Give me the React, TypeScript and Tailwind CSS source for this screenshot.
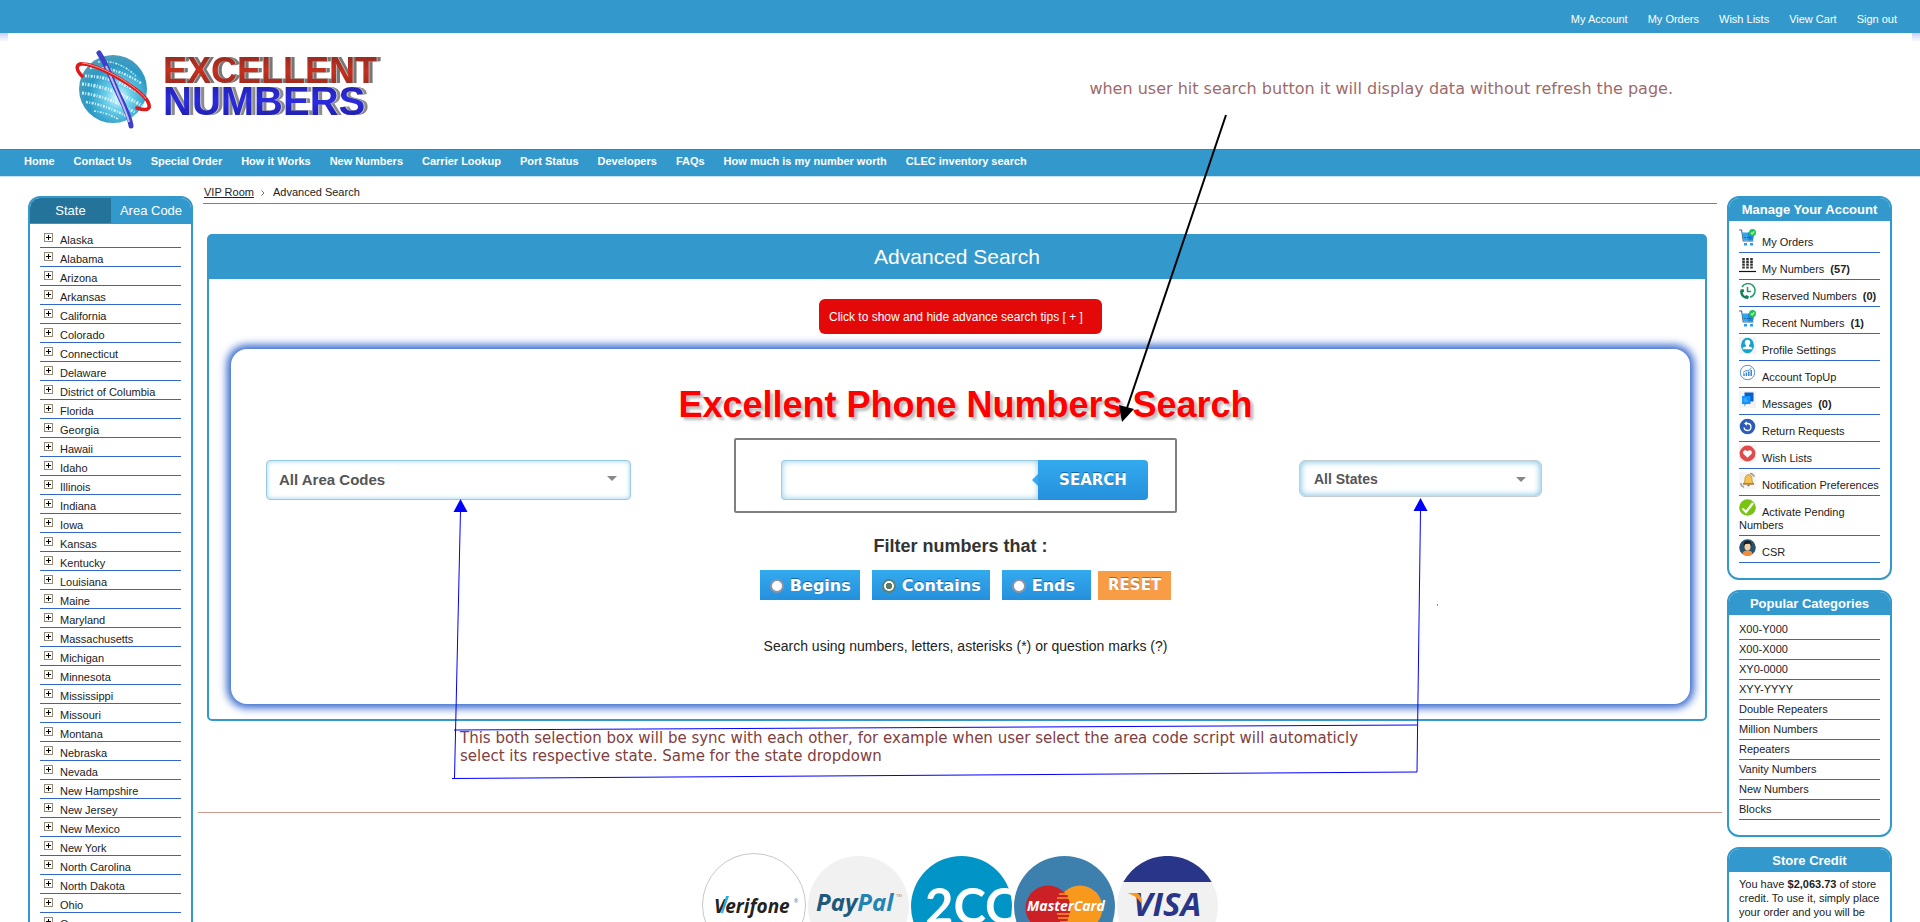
import { useState } from "react";
import type { ReactNode } from "react";

const topLinks = ["My Account", "My Orders", "Wish Lists", "View Cart", "Sign out"];

const navLinks = [
  "Home",
  "Contact Us",
  "Special Order",
  "How it Works",
  "New Numbers",
  "Carrier Lookup",
  "Port Status",
  "Developers",
  "FAQs",
  "How much is my number worth",
  "CLEC inventory search",
];

const states = [
  "Alaska", "Alabama", "Arizona", "Arkansas", "California", "Colorado", "Connecticut", "Delaware",
  "District of Columbia", "Florida", "Georgia", "Hawaii", "Idaho", "Illinois", "Indiana", "Iowa",
  "Kansas", "Kentucky", "Louisiana", "Maine", "Maryland", "Massachusetts", "Michigan", "Minnesota",
  "Mississippi", "Missouri", "Montana", "Nebraska", "Nevada", "New Hampshire", "New Jersey",
  "New Mexico", "New York", "North Carolina", "North Dakota", "Ohio", "Oregon",
];

const categories = [
  "X00-Y000", "X00-X000", "XY0-0000", "XYY-YYYY", "Double Repeaters", "Million Numbers",
  "Repeaters", "Vanity Numbers", "New Numbers", "Blocks",
];

const CartIcon = () => (
  <>
    <path d="M0 1h2.6l1.6 11h10" fill="none" stroke="#4a6378" strokeWidth="1.1" />
    <path d="M3 3.5h12l-1 8H4.3z" fill="#34a5ea" />
    <path d="M9 3.5h6l-1 8H9z" fill="#1f86d6" />
    <path d="M5.5 8.5h1M8 8.5h1M10.500 8.500h1" stroke="#0d3f6d" />
    <path d="M4 12.500h10.500" stroke="#9fb2c2" />
    <rect x="5" y="14" width="3" height="2.500" fill="#2b9cf2" />
    <rect x="11" y="14" width="3" height="2.500" fill="#2b9cf2" />
    <circle cx="13.500" cy="3.500" r="3.500" fill="#18c55c" />
    <path d="M11.900 3.600l1.200 1.200 2.100-2.300" fill="none" stroke="#d6ff7b" strokeWidth="1.200" />
  </>
);

const accountItems: { label: string; count?: number; icon: ReactNode }[] = [
  { label: "My Orders", icon: <CartIcon /> },
  {
    label: "My Numbers",
    count: 57,
    icon: (
      <>
        <path d="M4.500 2v11M8.500 2v11M12.500 2v11" stroke="#333" strokeWidth="2.600" strokeDasharray="2.200 .6" />
        <path d="M0 15.500h17" stroke="#111" strokeWidth="1.200" />
      </>
    ),
  },
  {
    label: "Reserved Numbers",
    count: 0,
    icon: (
      <>
        <path d="M3 4A7 7 0 1 1 11 14.300" fill="none" stroke="#1d9a6c" strokeWidth="1.500" />
        <path d="M8.500 4v4.500h3.500" fill="none" stroke="#1d9a6c" strokeWidth="1.500" />
        <path d="M1.500 6.500c-1.500 5 2 9.500 7.500 9.500l1-2.500-2.500-1.500-1.500 1C4.500 12 3.800 10.500 3.800 9.500l1.400-.8L4.500 6z" fill="#15805a" />
      </>
    ),
  },
  { label: "Recent Numbers", count: 1, icon: <CartIcon /> },
  {
    label: "Profile Settings",
    icon: (
      <>
        <rect width="17" height="17" fill="#f3f3f3" />
        <ellipse cx="8.500" cy="8.500" rx="6.500" ry="7.700" fill="#12a5cc" />
        <path d="M8.500 2.800a2.600 2.900 0 0 1 1.500 5.400v1.300c1.800.4 3.300 1 3.500 2.700H3.500c.2-1.700 1.700-2.300 3.500-2.700V8.200a2.600 2.900 0 0 1 1.500-5.400z" fill="#fff" />
      </>
    ),
  },
  {
    label: "Account TopUp",
    icon: (
      <>
        <circle cx="8.500" cy="8.500" r="7.200" fill="#fff" stroke="#4b93dc" strokeWidth="1" />
        <path d="M5 12V9.500M7.400 12V8.500M9.800 12V7.500M12.200 12V6" stroke="#3c84d6" strokeWidth="1.500" />
        <path d="M4 8.500L7 6.500l2 .5 3.500-3" fill="none" stroke="#3c84d6" strokeWidth=".9" />
      </>
    ),
  },
  {
    label: "Messages",
    count: 0,
    icon: (
      <>
        <rect width="17" height="17" fill="#f3f3f3" />
        <path d="M5.500 1.500h9v9h-9z" fill="#0b5fc4" />
        <path d="M3 5h8.500v8H7l-1.500 2.500V13H3z" fill="#1392ff" />
        <path d="M4.500 8h3M4.500 10h4.500" stroke="#7fc6ff" strokeWidth=".8" />
      </>
    ),
  },
  {
    label: "Return Requests",
    icon: (
      <>
        <circle cx="8.500" cy="8.500" r="7.800" fill="#2b5cb8" />
        <path d="M5 9.500a3.500 3.500 0 1 0 3.500-4H7" fill="none" stroke="#fff" strokeWidth="1.300" />
        <path d="M7.800 3.200v4.600L5 5.500z" fill="#fff" />
      </>
    ),
  },
  {
    label: "Wish Lists",
    icon: (
      <>
        <rect width="17" height="17" fill="#f3f3f3" />
        <circle cx="8.500" cy="8.500" r="7.900" fill="#e04b4b" />
        <path d="M8.500 12.800L4.600 8.900C3 7 5.500 3.500 8.500 6.200c3-2.700 5.500.8 3.900 2.700z" fill="#fff" />
      </>
    ),
  },
  {
    label: "Notification Preferences",
    icon: (
      <>
        <rect width="17" height="17" fill="#f5f5f5" />
        <path d="M11 .8c2.500 0 4.500 1.700 5 4.200l-2-.5c-.5-1.300-1.500-2-3-2.200zM1 11c0 2.500 1.700 4.500 4.200 5l-.5-2C3.400 13.500 2.700 12.500 2.500 11z" fill="#a39a8d" />
        <path d="M9.500 2.500c3 .3 3.600 2.500 3.600 5 0 2 .6 3.200 1.600 4.300H4.300c1-1.100 1.500-2.300 1.600-4.300.1-2.500 1-4.700 3.600-5z" fill="#f2c14e" stroke="#b5832a" strokeWidth=".7" />
        <path d="M4 12h11" stroke="#8a5d20" />
        <path d="M8 13h3l-1.500 1.600z" fill="#8a5d20" />
      </>
    ),
  },
  {
    label: "Activate Pending Numbers",
    icon: (
      <>
        <circle cx="8.500" cy="8.500" r="8.300" fill="#79c411" />
        <path d="M3.500 9.500l3.500 3.500L14 4" fill="none" stroke="#fff" strokeWidth="2.300" />
      </>
    ),
  },
  {
    label: "CSR",
    icon: (
      <>
        <circle cx="8.500" cy="8.500" r="8.300" fill="#2a526e" />
        <path d="M3.500 15.200c.3-3 2-3.700 5-3.700s4.700.7 5 3.700a8.300 8.300 0 0 1-10 0z" fill="#f08c3c" />
        <ellipse cx="8.500" cy="7.500" rx="3" ry="4" fill="#f6cfa0" />
        <path d="M4.800 7.500C4 3 6.500 1.800 8.500 1.800s4.700 1.200 3.700 5.700L11 4.800 6.500 5z" fill="#1d1d1d" />
      </>
    ),
  },
];

const Logo = () => (
  <svg width="330" height="100" viewBox="0 0 330 100" role="img" aria-label="Excellent Numbers" fontFamily="'Liberation Sans', sans-serif" fontWeight="bold">
    <defs>
      <radialGradient id="globe" cx=".58" cy=".62" r=".6">
        <stop offset="0" stopColor="#eafcff" />
        <stop offset=".3" stopColor="#6fd0ea" />
        <stop offset=".75" stopColor="#2b9ac6" />
        <stop offset="1" stopColor="#4a9cba" />
      </radialGradient>
      <linearGradient id="red" x1="0" y1="0" x2="0" y2="1">
        <stop offset="0" stopColor="#7e2a22" />
        <stop offset=".5" stopColor="#c5301f" />
        <stop offset="1" stopColor="#8c2a20" />
      </linearGradient>
      <linearGradient id="blue" x1="0" y1="0" x2="0" y2="1">
        <stop offset="0" stopColor="#2020a0" />
        <stop offset=".5" stopColor="#2b2be0" />
        <stop offset="1" stopColor="#1c1c98" />
      </linearGradient>
    </defs>
    <circle cx="43" cy="49" r="34" fill="url(#globe)" />
    <g fill="none" stroke="#e6fbff" strokeWidth="2.400" strokeDasharray="2 1.300 1 1.500" opacity=".85">
      <path d="M28 22q20-3 38 14" strokeWidth="1.600" />
      <path d="M20 28q26-2 52 16" />
      <path d="M15 36q28 0 60 20" strokeWidth="3" />
      <path d="M12 44q28 2 60 22" strokeWidth="3.400" />
      <path d="M12 53q26 3 54 20" strokeWidth="3" />
      <path d="M16 62q20 3 42 15" />
      <path d="M24 71q14 2 24 8" strokeWidth="1.600" />
    </g>
    <path d="M29 13C36 23 42 40 47 51S60 76 61 86" fill="none" stroke="#3f3fc8" strokeWidth="5" strokeLinecap="round" />
    <path d="M36 26C41 37 44 45 48 54s9 20 11 28" fill="none" stroke="#b9bcf5" strokeWidth="2" />
    <path d="M12 36C4 28 7 23 14 24c18 2 58 26 64 38 4 8-2 9-11 6" fill="none" stroke="#e01818" strokeWidth="3.600" strokeLinecap="round" />
    <path d="M12 23c20 2 56 24 64 36" fill="none" stroke="#ff9090" strokeWidth="1" />
    <text x="93" y="43" fontSize="36" fill="url(#red)" className="[filter:drop-shadow(1px_0_0_#b8b8b8)_drop-shadow(3px_0_0_#777)]">
      EXCELLENT
    </text>
    <text x="93" y="75" fontSize="40" fill="url(#blue)" className="[filter:drop-shadow(1px_0_0_#d0d0d0)_drop-shadow(3px_0_0_#8c8c8c)]">
      NUMBERS
    </text>
  </svg>
);

const Caret = ({ className }: { className: string }) => (
  <svg className={className} width="10" height="5" viewBox="0 0 10 5" aria-hidden="true">
    <path d="M0 0h10L5 5z" fill="#888" />
  </svg>
);

const SideBox = ({ title, children }: { title: string; children: ReactNode }) => (
  <section className="overflow-hidden rounded-xl border-2 border-[#3399cc] bg-white">
    <h2 className="h-[23px] bg-[#3399cc] text-center text-[13px] leading-[23px] font-bold text-white">{title}</h2>
    <div className="px-[10px] pt-[5px] pb-[15px]">{children}</div>
  </section>
);

const StatesBox = () => (
  <section className="overflow-hidden rounded-xl border-2 border-[#3399cc] bg-white">
    <div className="flex h-[26px] bg-[#3399cc] text-[13px] text-white">
      <button type="button" className="h-[25px] w-[81px] rounded-tl-[10px] bg-[#24739b]">State</button>
      <button type="button" className="h-[25px] flex-1">Area Code</button>
    </div>
    <ul className="px-[10px] pt-[5px] pb-[15px]">
      {states.map((state) => (
        <li key={state} className="flex h-[19px] items-start gap-[7px] border-b border-[#3366cc] pt-1 pl-1">
          <svg width="9" height="9" viewBox="0 0 9 9" shapeRendering="crispEdges" aria-hidden="true">
            <rect x=".5" y=".5" width="8" height="8" fill="#fff" stroke="#948a76" />
            <path d="M2 4.500h5M4.500 2v5" stroke="#000" />
          </svg>
          <a href="#" className="leading-[14px]">{state}</a>
        </li>
      ))}
    </ul>
  </section>
);

const modes = [
  { name: "Begins", className: "pr-[9px]" },
  { name: "Contains", className: "pr-[9px]" },
  { name: "Ends", className: "pr-4" },
];

const SearchForm = () => {
  const [mode, setMode] = useState("Contains");

  return (
    <form
      className="mt-[15px] mr-[15px] mb-[15px] ml-[22px] rounded-2xl bg-white pt-[34px] pb-12 shadow-[0_0_8px_4px_#3366cc]"
      onSubmit={(e) => e.preventDefault()}
    >
      <h1 className="pl-[10px] text-center text-4xl leading-[44px] font-bold text-[#ff0000] [text-shadow:3px_3px_3px_#bbb]">
        Excellent Phone Numbers Search
      </h1>

      <div className="mt-[11px] grid grid-cols-[1fr_443px_1fr] items-start pr-[10px]">
        <div className="relative mt-[22px] ml-[35px] w-[365px]">
          <select
            aria-label="Area code"
            className="h-10 w-full appearance-none rounded border border-[#99cce4] bg-white pl-3 text-[15px] font-bold text-[#555] shadow-[inset_0_0_5px_#99d0ec]"
          >
            <option>All Area Codes</option>
          </select>
          <Caret className="pointer-events-none absolute top-4 right-[14px]" />
        </div>

        <div className="flex h-[75px] rounded-xs border-2 border-[#7f7f7f] pt-5 pl-[45px]">
          <input
            type="text"
            aria-label="Number to search"
            className="h-10 w-[257px] rounded-l border border-r-0 border-[#99cce4] px-3 text-[15px] shadow-[inset_0_0_6px_#8cc8e8] outline-none"
          />
          <button
            type="submit"
            className="relative h-10 w-[110px] rounded-r bg-linear-to-b from-[#33aaee] to-[#2590dd] font-['DejaVu_Sans',sans-serif] text-[15px] font-bold text-white [text-shadow:0_-1px_0_#17659e]"
          >
            <svg className="absolute top-[14px] -left-[6px]" width="6" height="12" viewBox="0 0 6 12" aria-hidden="true">
              <path d="M6 0v12L0 6z" fill="#33aaee" />
            </svg>
            SEARCH
          </button>
        </div>

        <div className="relative mt-[22px] ml-[122px] w-[243px]">
          <select
            aria-label="State"
            className="h-[37px] w-full appearance-none rounded-md border border-[#c4ccd0] bg-white pl-[14px] text-sm font-bold text-[#555] shadow-[inset_0_0_6px_1px_#80c4e6]"
          >
            <option>All States</option>
          </select>
          <Caret className="pointer-events-none absolute top-[17px] right-4" />
        </div>
      </div>

      <h3 className="mt-[22px] text-center text-lg leading-[22px] font-bold text-[#333]">Filter numbers that :</h3>

      <div className="mt-[13px] flex items-end justify-center pl-[10px] font-['DejaVu_Sans',sans-serif] font-bold text-white">
        <div className="flex gap-3">
          {modes.map((m) => (
            <label
              key={m.name}
              className={`flex h-[30px] items-center gap-[6px] bg-linear-to-b from-[#33aaee] to-[#2590dd] pt-[2px] pl-[10px] text-base [text-shadow:0_-1px_0_#17659e] ${m.className}`}
            >
              <input
                type="radio"
                name="mode"
                checked={mode === m.name}
                onChange={() => setMode(m.name)}
                className="h-[14px] w-[14px] appearance-none rounded-full border-2 border-[#8f93a8] bg-white checked:border-[#5d8078] checked:bg-[radial-gradient(circle,#5c7a62_0_3px,#fff_3px)]"
              />
              {m.name}
            </label>
          ))}
        </div>
        <button
          type="reset"
          className="ml-[7px] h-[29px] bg-[#f89c46] px-[10px] pb-px text-[15px] [text-shadow:0_-1px_0_#9a6a3c]"
          onClick={() => setMode("Contains")}
        >
          RESET
        </button>
      </div>

      <p className="mt-9 pl-[10px] text-center text-sm leading-5">
        Search using numbers, letters, asterisks (*) or question marks (?)
      </p>
    </form>
  );
};

const Payments = () => (
  <div className="mt-10 flex items-start justify-center gap-[2px]">
    <svg width="104" height="104" viewBox="0 0 104 104" role="img" aria-label="Verifone">
      <circle cx="52" cy="52" r="51.500" fill="#fff" stroke="#c8c8c8" />
      <text x="12" y="60" fontFamily="'Open Sans', sans-serif" fontStyle="italic" fontWeight="bold" fontSize="19" fill="#222">Verifone</text>
      <path d="M19 60l5-17h3l-6 17z" fill="#29abe2" />
      <text x="92" y="50" fontFamily="'Open Sans', sans-serif" fontSize="5" fill="#666">®</text>
    </svg>
    <svg className="mt-[3px]" width="101" height="101" viewBox="0 0 101 101" role="img" aria-label="PayPal">
      <circle cx="50.500" cy="50.500" r="50.500" fill="#f1f1f2" />
      <text x="8" y="55" fontFamily="'Open Sans', sans-serif" fontStyle="italic" fontWeight="bold" fontSize="24">
        <tspan fill="#21587a">Pay</tspan>
        <tspan fill="#2384b4">Pal</tspan>
      </text>
      <text x="88" y="41" fontFamily="'Open Sans', sans-serif" fontSize="4" fill="#888">TM</text>
    </svg>
    <svg className="mt-[3px]" width="101" height="101" viewBox="0 0 101 101" role="img" aria-label="2CO">
      <circle cx="50.500" cy="50.500" r="50.500" fill="#0095c6" />
      <text x="14" y="68" fontFamily="Lato, sans-serif" fontWeight="bold" fontSize="49" fill="#fff">2CO</text>
    </svg>
    <svg className="mt-[3px]" width="101" height="101" viewBox="0 0 101 101" role="img" aria-label="MasterCard">
      <circle cx="50.500" cy="50.500" r="50.500" fill="#3d80ad" />
      <circle cx="66" cy="52" r="22.500" fill="#f8981d" />
      <circle cx="34" cy="52" r="22.500" fill="#cb2026" />
      <path d="M45 38h10M43 42h13M43 58h13M44 62h12M46 66h9" stroke="#f8981d" strokeWidth="1.500" />
      <path d="M46 40h8M45 60h9M46 64h8" stroke="#cb2026" strokeWidth="1.500" />
      <text x="13" y="55" fontFamily="'Open Sans', sans-serif" fontStyle="italic" fontWeight="bold" fontSize="14" fill="#fff">MasterCard</text>
    </svg>
    <svg className="mt-[3px]" width="101" height="101" viewBox="0 0 101 101" role="img" aria-label="Visa">
      <circle cx="50.500" cy="50.500" r="50.500" fill="#f1f1f2" />
      <path d="M6.300 26a50.500 50.500 0 0 1 88.400 0z" fill="#283588" />
      <text x="16" y="60" fontFamily="'Open Sans', sans-serif" fontStyle="italic" fontWeight="bold" fontSize="33" fill="#283588">VISA</text>
      <path d="M10 37h9c3 0 4 2 5 5l1 7c-3-6-8-10-15-12z" fill="#f8981d" />
    </svg>
  </div>
);

// hand-drawn arrows that tie the notes to the controls
const NoteArrows = () => (
  <svg className="pointer-events-none absolute top-0 left-0" width="1920" height="922" viewBox="0 0 1920 922" aria-hidden="true">
    <path d="M1226 115L1127 408" stroke="#000" strokeWidth="2" />
    <path d="M1122 422l-3-17 15 4z" fill="#000" />
    <g fill="none" stroke="#00f" strokeWidth="1">
      <path d="M454.500 778L460.500 510" />
      <path d="M454 730L1417 725" />
      <path d="M452 778.500L1417 772" />
      <path d="M1417 772L1420.500 510" />
      <path d="M1437.500 604v2" opacity=".5" />
    </g>
    <path d="M460.500 499l7 13h-14z" fill="#00f" />
    <path d="M1420.500 498l7 13h-14z" fill="#00f" />
  </svg>
);

const App = () => {
  return (
    <div className="relative h-screen overflow-hidden bg-white font-['Liberation_Sans',Arial,sans-serif] text-[11px] text-[#222]">
      <div className="flex h-[33px] justify-end gap-5 bg-[#3399cc] pt-3 pr-[23px] leading-[14px] text-white">
        {topLinks.map((link) => (
          <a key={link} href="#">{link}</a>
        ))}
      </div>

      <header className="bg-[linear-gradient(#ccccff,#ffffff)] bg-[length:100%_9px] bg-no-repeat">
        <div className="mx-2 flex h-[116px] items-start justify-between bg-white pt-[7px] pr-[239px] pl-[62px]">
          <Logo />
          <p className="mt-10 font-['DejaVu_Sans',sans-serif] text-base leading-[18px] text-[#9c6b6b]">
            when user hit search button it will display data without refresh the page.
          </p>
        </div>
      </header>

      <nav className="flex h-7 gap-[19px] border-t border-b border-t-[#6666cc] border-b-[#c5e2f0] bg-[#3399cc] pt-1 pl-6 leading-[14px] font-bold text-white">
        {navLinks.map((link) => (
          <a key={link} href="#">{link}</a>
        ))}
      </nav>

      <div className="flex items-start gap-[5px] px-7">
        <aside className="mt-[19px] w-[165px] shrink-0">
          <StatesBox />
        </aside>

        <main className="min-w-0 flex-1">
          <div className="mx-[5px] flex h-[27px] items-start border-b border-[#3399cc] pt-2 pl-px leading-[14px]">
            <a href="#" className="underline">VIP Room</a>
            <svg className="mt-[5px] mr-2 ml-[7px]" width="4" height="6" viewBox="0 0 4 6" aria-hidden="true">
              <path d="M.5.5L3 3 .5 5.500" fill="none" stroke="#7a7a3c" />
            </svg>
            <span>Advanced Search</span>
          </div>

          <section className="mt-[30px] mr-[15px] ml-[9px] flex flex-col rounded-[5px] border-2 border-[#3399cc]">
            <h2 className="h-[43px] bg-[#3399cc] text-center text-[21px] leading-[42px] text-white">Advanced Search</h2>
            <button
              type="button"
              className="mt-5 ml-[7px] h-[35px] w-[283px] self-center rounded-md bg-[#e40909] pl-[10px] text-left text-xs text-white"
            >
              Click to show and hide advance search tips [ + ]
            </button>
            <SearchForm />
          </section>

          <p className="mt-2 pl-[262px] font-['DejaVu_Sans',sans-serif] text-[15px] leading-[18px] text-[#804040]">
            This both selection box will be sync with each other, for example when user select the area code script will automaticly
            <br />
            select its respective state. Same for the state dropdown
          </p>

          <hr className="mt-[47px] border-[#cc9990]" />
          <Payments />
        </main>

        <aside className="mt-[19px] flex w-[165px] shrink-0 flex-col gap-[10px]">
          <SideBox title="Manage Your Account">
            <ul>
              {accountItems.map((item) => (
                <li key={item.label} className="border-b border-[#3366cc] py-[3px] leading-[13px]">
                  <a href="#">
                    <svg className="mr-[6px] inline align-baseline" width="17" height="17" viewBox="0 0 17 17" aria-hidden="true">
                      {item.icon}
                    </svg>
                    {item.label}
                    {item.count !== undefined && <b className="ml-[6px]">({item.count})</b>}
                  </a>
                </li>
              ))}
            </ul>
          </SideBox>

          <SideBox title="Popular Categories">
            <ul>
              {categories.map((category) => (
                <li key={category} className="h-5 border-b border-[#3366cc] leading-[19px]">
                  <a href="#">{category}</a>
                </li>
              ))}
            </ul>
          </SideBox>

          <SideBox title="Store Credit">
            <p className="leading-[14px]">
              You have <b>$2,063.73</b> of store credit. To use it, simply place your order and you will be
              given the option to pay with it.
            </p>
          </SideBox>
        </aside>
      </div>

      <NoteArrows />
    </div>
  );
};

export default App;
